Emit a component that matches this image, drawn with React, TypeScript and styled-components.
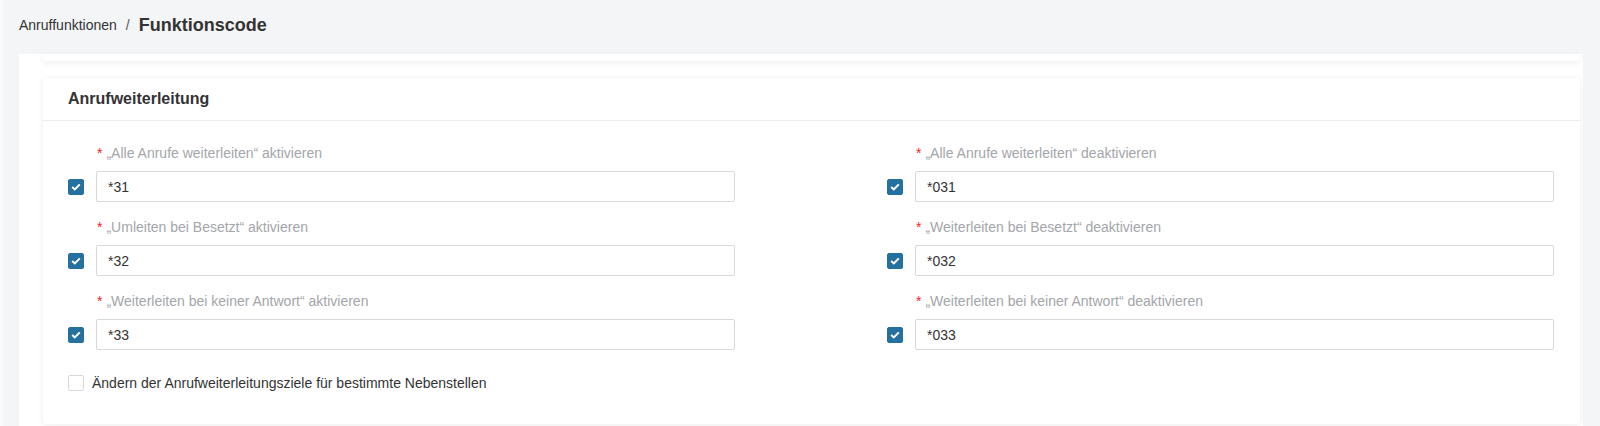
import React from 'react';
import styled, { createGlobalStyle } from 'styled-components';

const GlobalStyle = createGlobalStyle`
  html, body {
    margin: 0;
    padding: 0;
    background: #f4f5f7;
    font-family: "Liberation Sans", Arial, sans-serif;
    color: #333;
  }
  * { box-sizing: border-box; }
`;

interface Field {
  label: string;
  value: string;
}

const leftFields: Field[] = [
  { label: '„Alle Anrufe weiterleiten“ aktivieren', value: '*31' },
  { label: '„Umleiten bei Besetzt“ aktivieren', value: '*32' },
  { label: '„Weiterleiten bei keiner Antwort“ aktivieren', value: '*33' }
];

const rightFields: Field[] = [
  { label: '„Alle Anrufe weiterleiten“ deaktivieren', value: '*031' },
  { label: '„Weiterleiten bei Besetzt“ deaktivieren', value: '*032' },
  { label: '„Weiterleiten bei keiner Antwort“ deaktivieren', value: '*033' }
];

const Page = styled.div`
  display: flex;
  min-height: 426px;
  border-left: 3px solid #fafafa;
`;

const Main = styled.div`
  flex: 1;
  display: flex;
  flex-direction: column;
`;

const Breadcrumb = styled.div`
  height: 54px;
  padding: 0 0 4px 16px;
  display: flex;
  align-items: center;
  gap: 9px;
`;

const Crumb = styled.span`
  font-size: 14px;
  color: #333;
`;

const Sep = styled.span`
  font-size: 14px;
  color: #555;
`;

const Current = styled.span`
  font-size: 18px;
  font-weight: 700;
  color: #333;
`;

const Panel = styled.div`
  flex: 1;
  margin-left: 16px;
  width: 1564px;
  background: #fff;
  padding: 0 3px 0 24px;
`;

const PrevCard = styled.div`
  height: 7px;
  background: #fff;
  border-radius: 0 0 4px 4px;
  box-shadow: 0 2px 6px rgba(0, 0, 0, 0.07);
`;

const Card = styled.div`
  margin-top: 17px;
  background: #fff;
  border-radius: 4px;
  box-shadow: 0 1px 6px rgba(0, 0, 0, 0.08);
`;

const CardHeader = styled.div`
  height: 43px;
  padding: 0 0 1px 25px;
  display: flex;
  align-items: center;
  border-bottom: 1px solid #ececec;
  font-size: 16px;
  font-weight: 700;
  color: #333;
`;

const CardBody = styled.div`
  padding: 21px 26px 30px 25px;
`;

const Grid = styled.div`
  display: grid;
  grid-template-columns: 1fr 1fr;
  column-gap: 152px;
`;

const Column = styled.div`
  display: flex;
  flex-direction: column;
  gap: 14px;
`;

const FieldItem = styled.div`
  display: flex;
  flex-direction: column;
  gap: 7px;
`;

const Label = styled.div`
  height: 22px;
  padding-left: 29px;
  display: flex;
  align-items: center;
  font-size: 14px;
  color: #a3a6ab;
`;

const Required = styled.span`
  color: #f5222d;
  margin-right: 4px;
`;

const InputRow = styled.div`
  display: flex;
  align-items: center;
  gap: 12px;
`;

const Box = styled.span<{ $checked?: boolean }>`
  width: 16px;
  height: 16px;
  flex: none;
  border-radius: 2px;
  display: inline-flex;
  align-items: center;
  justify-content: center;
  background: ${(p) => (p.$checked ? '#24709f' : '#fff')};
  border: 1px solid ${(p) => (p.$checked ? '#24709f' : '#d9d9d9')};
`;

const Input = styled.div`
  flex: 1;
  height: 31px;
  border: 1px solid #d9d9d9;
  border-radius: 2px;
  padding-left: 11px;
  display: flex;
  align-items: center;
  font-size: 14px;
  color: #333;
`;

const Extra = styled.label`
  margin-top: 22px;
  height: 22px;
  display: flex;
  align-items: center;
  gap: 8px;
  font-size: 14px;
  color: #333;
`;

function Checkbox({ checked }: { checked?: boolean }) {
  return (
    <Box $checked={checked}>
      {checked && (
        <svg width="10" height="8" viewBox="0 0 10 8">
          <polyline points="1.2,4 3.8,6.4 8.8,1.4" fill="none" stroke="#fff" strokeWidth="2" />
        </svg>
      )}
    </Box>
  );
}

function FieldColumn({ fields }: { fields: Field[] }) {
  return (
    <Column>
      {fields.map((f) => (
        <FieldItem key={f.value}>
          <Label>
            <Required>*</Required>
            {f.label}
          </Label>
          <InputRow>
            <Checkbox checked />
            <Input>{f.value}</Input>
          </InputRow>
        </FieldItem>
      ))}
    </Column>
  );
}

export default function App() {
  return (
    <>
      <GlobalStyle />
      <Page>
        <Main>
          <Breadcrumb>
            <Crumb>Anruffunktionen</Crumb>
            <Sep>/</Sep>
            <Current>Funktionscode</Current>
          </Breadcrumb>
          <Panel>
            <PrevCard />
            <Card>
              <CardHeader>Anrufweiterleitung</CardHeader>
              <CardBody>
                <Grid>
                  <FieldColumn fields={leftFields} />
                  <FieldColumn fields={rightFields} />
                </Grid>
                <Extra>
                  <Checkbox />
                  Ändern der Anrufweiterleitungsziele für bestimmte Nebenstellen
                </Extra>
              </CardBody>
            </Card>
          </Panel>
        </Main>
      </Page>
    </>
  );
}
